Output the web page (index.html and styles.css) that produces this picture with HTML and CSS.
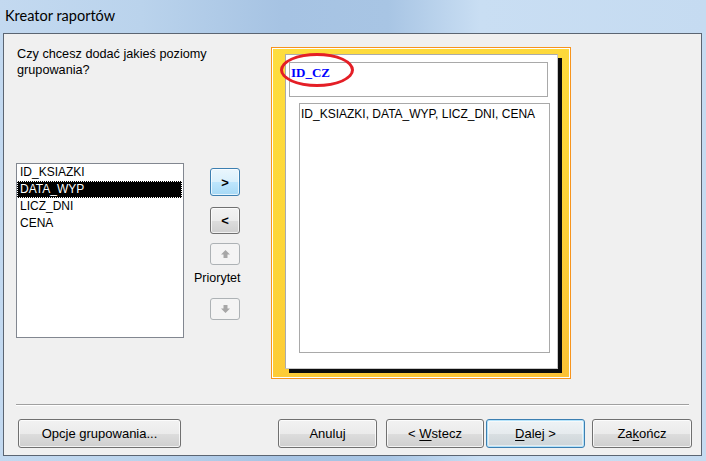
FILE: index.html
```html
<!DOCTYPE html>
<html lang="pl">
<head>
<meta charset="utf-8">
<title>Kreator raportów</title>
<link rel="stylesheet" href="styles.css">
</head>
<body>
<div class="window">
  <div class="titlebar">Kreator raportów</div>
  <div class="client">
    <div class="main">
      <div class="left-col">
        <p class="question">Czy chcesz dodać jakieś poziomy<br>grupowania?</p>
        <div class="listbox">
          <div class="item">ID_KSIAZKI</div>
          <div class="item selected">DATA_WYP</div>
          <div class="item">LICZ_DNI</div>
          <div class="item">CENA</div>
        </div>
      </div>
      <div class="mid-col">
        <button class="sbtn hot btn-add">&gt;</button>
        <button class="sbtn btn-remove">&lt;</button>
        <button class="sbtn disabled btn-up" aria-label="W górę">
          <svg width="9" height="8" viewBox="0 0 9 8"><path d="M4.5 0 L9 4.5 L6.5 4.5 L6.5 8 L2.5 8 L2.5 4.5 L0 4.5 Z" fill="#a7a7a7"/></svg>
        </button>
        <div class="prio">Priorytet</div>
        <button class="sbtn disabled btn-down" aria-label="W dół">
          <svg width="9" height="8" viewBox="0 0 9 8"><path d="M4.5 8 L9 3.5 L6.5 3.5 L6.5 0 L2.5 0 L2.5 3.5 L0 3.5 Z" fill="#a7a7a7"/></svg>
        </button>
      </div>
      <div class="preview">
        <div class="page">
          <div class="group-header">ID_CZ</div>
          <div class="detail">ID_KSIAZKI, DATA_WYP, LICZ_DNI, CENA</div>
        </div>
        <div class="ellipse"></div>
      </div>
    </div>
    <div class="separator"></div>
    <div class="footer">
      <button class="btn btn-options">Opcje grupowania...</button>
      <button class="btn btn-cancel">Anuluj</button>
      <button class="btn btn-back">&lt; <u>W</u>stecz</button>
      <button class="btn btn-next default"><u>D</u>alej &gt;</button>
      <button class="btn btn-finish">Za<u>k</u>ończ</button>
    </div>
  </div>
</div>
</body>
</html>
```

FILE: styles.css
```css
* { box-sizing: border-box; }

html, body {
  margin: 0;
  padding: 0;
}

body {
  width: 706px;
  height: 461px;
  overflow: hidden;
  background: #b7cfe9;
  font-family: "Liberation Sans", Arial, sans-serif;
  font-size: 12px;
  color: #000;
}

.window {
  height: 461px;
  display: flex;
  flex-direction: column;
  background: linear-gradient(90deg, #c3d9f0 0%, #bad3ec 20%, #a6c3e3 40%, #a8c5e4 55%, #c9def3 68%, #c5dbf1 100%);
}

.titlebar {
  height: 33px;
  flex: none;
  padding: 0 0 2px 5px;
  display: flex;
  align-items: center;
  font-family: Lato, "Liberation Sans", sans-serif;
  font-size: 14.5px;
  color: #000;
}

.client {
  flex: 1;
  margin: 0 4px 5px 3px;
  border: 1px solid #5b6572;
  background: #f0f0f0;
  display: flex;
  flex-direction: column;
}

.main {
  height: 370px;
  flex: none;
  display: flex;
}

/* left column */
.left-col {
  width: 180px;
  margin-left: 12px;
  flex: none;
}

.question {
  margin: 12px 0 0 1px;
  font-size: 12.7px;
  line-height: 16px;
  white-space: nowrap;
}

.listbox {
  margin-top: 85px;
  width: 168px;
  height: 175px;
  border: 1px solid #828790;
  background: #fff;
  padding-top: 0;
}

.item {
  height: 17px;
  line-height: 17px;
  padding-left: 3px;
  margin-right: 1px;
  white-space: nowrap;
}

.item.selected {
  background: #000;
  color: #fff;
  outline: 1px dotted #fff;
  outline-offset: -1px;
}

/* middle column */
.mid-col {
  width: 30px;
  margin-left: 14px;
  padding-top: 134px;
  flex: none;
  display: flex;
  flex-direction: column;
}

.sbtn {
  width: 30px;
  padding: 0;
  border: 1px solid #707070;
  border-radius: 3px;
  background: linear-gradient(#f2f2f2 0%, #ebebeb 50%, #dddddd 51%, #cfcfcf 100%);
  font-family: "Liberation Sans", Arial, sans-serif;
  font-size: 13px;
  font-weight: bold;
  color: #000;
  display: flex;
  align-items: center;
  justify-content: center;
  box-shadow: inset 0 0 0 1px rgba(255,255,255,0.7);
}

.sbtn.hot {
  border-color: #3c7fb1;
  background: linear-gradient(#eaf6fd 0%, #d9f0fc 50%, #bee6fd 51%, #a7d9f5 100%);
}

.btn-add { height: 28px; }
.btn-remove { height: 27px; margin-top: 11px; }
.btn-up { height: 22px; margin-top: 9px; }
.btn-down { height: 22px; margin-top: 12px; }

.sbtn.disabled {
  border-color: #adb2b5;
  background: #f4f4f4;
  box-shadow: none;
}

.prio {
  width: 50px;
  margin: 5px 0 0 -16px;
  font-size: 12.5px;
  line-height: 16px;
  white-space: nowrap;
}

/* preview */
.preview {
  position: relative;
  width: 300px;
  height: 332px;
  margin: 13px 0 0 31px;
  flex: none;
  border: 1px solid #f7941d;
  background: linear-gradient(160deg, #fedd3e 0%, #fdd538 50%, #fcc235 100%);
  box-shadow: inset 0 0 0 1px #fff;
  padding: 6px 0 0 13px;
}

.page {
  width: 273px;
  height: 315px;
  background: #fff;
  border: 1px solid #ababab;
  border-right-color: #c8c8c8;
  border-bottom-color: #c8c8c8;
  box-shadow: 4px 4px 0 #0c0c0c;
  padding: 7px 0 0 3px;
}

.group-header {
  width: 259px;
  height: 35px;
  border: 1px solid #a9a9a9;
  padding: 2px 0 0 1px;
  font-family: "Liberation Serif", "Times New Roman", serif;
  font-weight: bold;
  font-size: 13px;
  color: #0000ff;
  line-height: 16px;
}

.detail {
  width: 251px;
  height: 250px;
  margin: 6px 0 0 10px;
  border: 1px solid #a9a9a9;
  padding: 2px 0 0 1px;
  line-height: 16px;
  white-space: nowrap;
}

.ellipse {
  position: absolute;
  left: 8px;
  top: 5px;
  width: 74px;
  height: 34px;
  border: 3px solid #e41e26;
  border-radius: 50%;
}

/* footer */
.separator {
  margin: 0 12px;
  height: 2px;
  border-top: 1px solid #a0a0a0;
  border-bottom: 1px solid #ffffff;
}

.footer {
  margin-top: 13px;
  padding-left: 14px;
  display: flex;
}

.btn {
  height: 29px;
  padding: 0;
  border: 1px solid #707070;
  border-radius: 3px;
  background: linear-gradient(#f2f2f2 0%, #ebebeb 50%, #dddddd 51%, #cfcfcf 100%);
  box-shadow: inset 0 0 0 1px rgba(255,255,255,0.75);
  font-family: "Liberation Sans", Arial, sans-serif;
  font-size: 13px;
  color: #000;
  text-align: center;
}

.btn u { text-decoration-thickness: 1px; text-underline-offset: 2px; }

.btn.default {
  border-color: #3c7fb1;
  box-shadow: inset 0 0 0 1px #b4e3fb, inset 0 0 0 2px rgba(255,255,255,0.5);
  background: linear-gradient(#eef3f6 0%, #e6ebee 50%, #d9dfe2 51%, #ccd4d8 100%);
}

.btn-options { width: 163px; }
.btn-cancel { width: 99px; margin-left: 97px; }
.btn-back { width: 98px; margin-left: 9px; }
.btn-next { width: 99px; margin-left: 2px; }
.btn-finish { width: 100px; margin-left: 7px; }
```
